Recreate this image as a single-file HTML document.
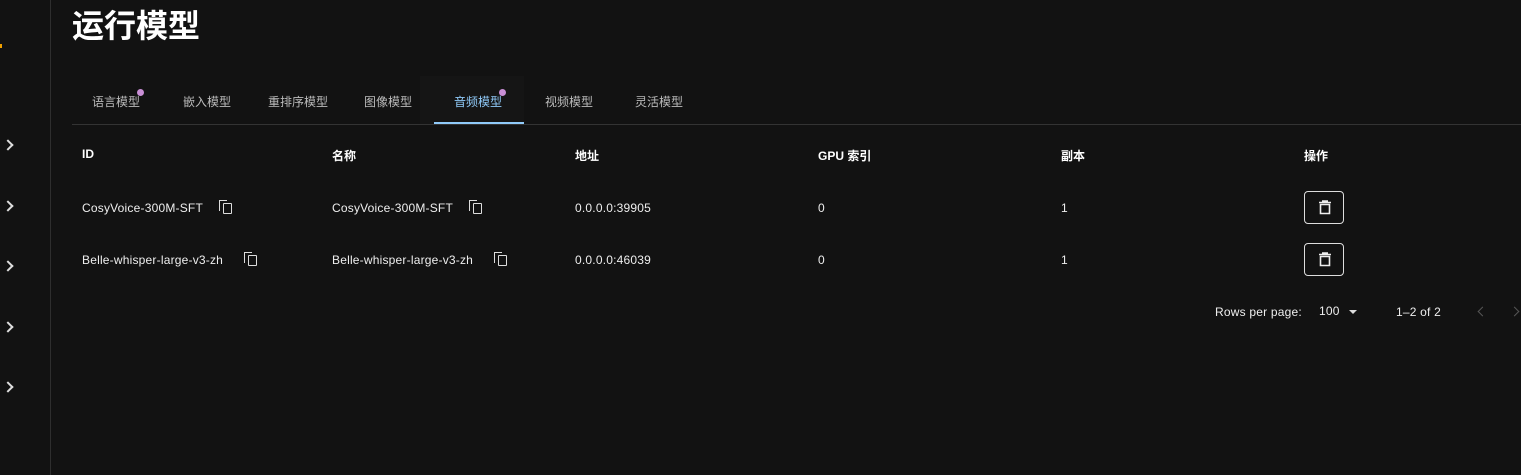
<!DOCTYPE html>
<html><head><meta charset="utf-8"><style>
*{margin:0;padding:0;box-sizing:border-box}
body{width:1521px;height:475px;background:#121212;color:#fff;font-family:"Liberation Sans","Noto Sans CJK SC",sans-serif;position:relative;overflow:hidden}
.side{position:absolute;left:0;top:0;width:51px;height:475px;border-right:1px solid #2e2e2e}
.chev{position:absolute;left:4px;width:8px;height:8px;border-right:2px solid #ddd;border-top:2px solid #ddd;transform:rotate(45deg)}
.abs{position:absolute;white-space:nowrap}
h1{position:absolute;left:72px;top:1px;font-size:32px;font-weight:bold}
.tab{position:absolute;top:93px;font-size:12px;color:#bbb}
.dot{position:absolute;width:7px;height:7px;border-radius:50%;background:#c98fd6}
.hd{font-size:12px;font-weight:bold;top:147px}
.c{font-size:12px;color:#eee;letter-spacing:0.2px}
.copy{position:absolute;width:9px;height:11px;border:1.5px solid #ddd;border-radius:1px}
.copy:before{content:"";position:absolute;left:-5px;top:-4px;width:7px;height:10px;border-left:1.5px solid #ddd;border-top:1.5px solid #ddd}
.btn{position:absolute;left:1304px;width:40px;height:33px;border:1px solid #ddd;border-radius:4px}
.pg{position:absolute;width:7px;height:7px;border-left:1.5px solid #555;border-top:1.5px solid #555}
</style></head><body>
<div class="side">
<div style="position:absolute;left:0;top:44px;width:2px;height:4px;background:#f0a000"></div>
<div class="chev" style="top:141px"></div><div class="chev" style="top:202px"></div><div class="chev" style="top:262px"></div><div class="chev" style="top:323px"></div><div class="chev" style="top:383px"></div>
</div>
<h1>运行模型</h1>
<div style="position:absolute;left:420px;top:76px;width:104px;height:48px;background:#151515"></div>
<div class="tab" style="left:92px">语言模型</div><div class="dot" style="left:137px;top:89px"></div>
<div class="tab" style="left:183px">嵌入模型</div>
<div class="tab" style="left:268px">重排序模型</div>
<div class="tab" style="left:364px">图像模型</div>
<div class="tab" style="left:454px;color:#90caf9">音频模型</div><div class="dot" style="left:499px;top:89px"></div>
<div class="tab" style="left:545px">视频模型</div>
<div class="tab" style="left:635px">灵活模型</div>
<div style="position:absolute;left:72px;top:124px;width:1449px;height:1px;background:#333"></div>
<div style="position:absolute;left:434px;top:122px;width:90px;height:2px;background:#90caf9"></div>
<div class="abs hd" style="left:82px">ID</div>
<div class="abs hd" style="left:332px">名称</div>
<div class="abs hd" style="left:575px">地址</div>
<div class="abs hd" style="left:818px">GPU 索引</div>
<div class="abs hd" style="left:1061px">副本</div>
<div class="abs hd" style="left:1304px">操作</div>

<div class="abs c" style="left:82px;top:201px">CosyVoice-300M-SFT</div><div class="copy" style="left:223px;top:203px"></div>
<div class="abs c" style="left:332px;top:201px">CosyVoice-300M-SFT</div><div class="copy" style="left:473px;top:203px"></div>
<div class="abs c" style="left:575px;top:201px">0.0.0.0:39905</div>
<div class="abs c" style="left:818px;top:201px">0</div>
<div class="abs c" style="left:1061px;top:201px">1</div>
<div class="btn" style="top:191px"><svg width="40" height="33" viewBox="0 0 40 33"><path d="M14 10.5h12M17 9h6M15.5 12.5h9v9h-9z" stroke="#eee" stroke-width="1.6" fill="none"/></svg></div>

<div class="abs c" style="left:82px;top:253px">Belle-whisper-large-v3-zh</div><div class="copy" style="left:248px;top:255px"></div>
<div class="abs c" style="left:332px;top:253px">Belle-whisper-large-v3-zh</div><div class="copy" style="left:498px;top:255px"></div>
<div class="abs c" style="left:575px;top:253px">0.0.0.0:46039</div>
<div class="abs c" style="left:818px;top:253px">0</div>
<div class="abs c" style="left:1061px;top:253px">1</div>
<div class="btn" style="top:243px"><svg width="40" height="33" viewBox="0 0 40 33"><path d="M14 10.5h12M17 9h6M15.5 12.5h9v9h-9z" stroke="#eee" stroke-width="1.6" fill="none"/></svg></div>

<div class="abs c" style="left:1215px;top:305px">Rows per page:</div>
<div class="abs c" style="left:1319px;top:304px">100</div>
<div class="abs" style="left:1349px;top:310px;border-left:4px solid transparent;border-right:4px solid transparent;border-top:4px solid #ddd"></div>
<div class="abs c" style="left:1396px;top:305px">1–2 of 2</div>
<div class="pg" style="left:1479px;top:308px;transform:rotate(-45deg)"></div>
<div class="pg" style="left:1511px;top:308px;transform:rotate(135deg)"></div>
</body></html>
